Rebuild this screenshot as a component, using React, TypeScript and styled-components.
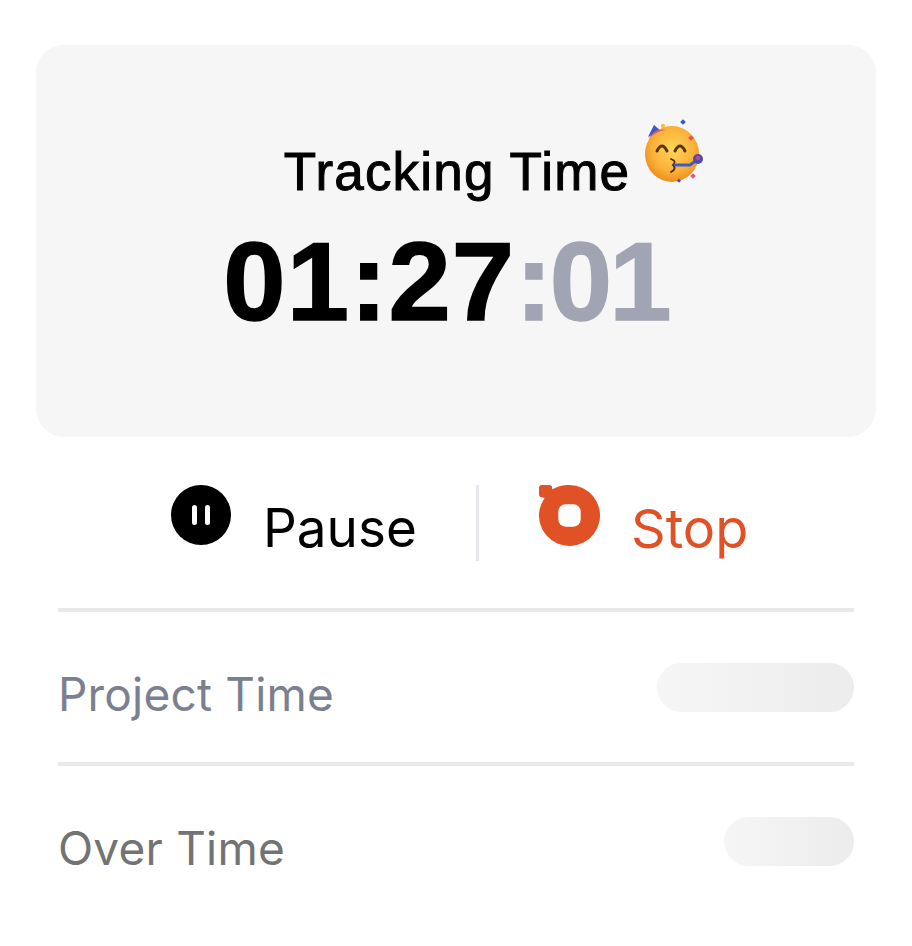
import React from 'react';
import styled, { createGlobalStyle } from 'styled-components';

const GlobalStyle = createGlobalStyle`
  html, body {
    margin: 0;
    padding: 0;
    background: #fff;
  }
`;

const Page = styled.div`
  width: 912px;
  height: 946px;
  box-sizing: border-box;
  padding: 45px 36px 0;
  overflow: hidden;
`;

const TimerCard = styled.section`
  height: 392px;
  box-sizing: border-box;
  padding-top: 78px;
  border-radius: 28px;
  background: #f6f6f6;
  display: flex;
  flex-direction: column;
  align-items: center;
`;

const TitleRow = styled.div`
  display: flex;
  align-items: flex-start;
  height: 100px;
  margin-left: 78px;
`;

const Title = styled.h1`
  margin: 0;
  font: 400 53px/98px 'Liberation Sans', Arial, sans-serif;
  letter-spacing: 1.2px;
  -webkit-text-stroke: 1px #000;
  color: #000;
`;

const Emoji = styled.svg`
  width: 64px;
  height: 68px;
  margin: -4px 0 0 12px;
`;

const Clock = styled.div`
  font: 700 112px/118px 'Liberation Sans', Arial, sans-serif;
  letter-spacing: 1.1px;
  -webkit-text-stroke: 1.5px currentColor;
  color: #000;
  margin-left: -20px;
`;

const Seconds = styled.span`
  color: #a1a5b3;
  letter-spacing: -2.8px;
`;

const Actions = styled.div`
  display: grid;
  grid-template-columns: 440px 3px 1fr;
  grid-template-rows: 76px;
  margin-top: 48px;
`;

const Action = styled.button<{ $tone: string; $gap: number; $start: number; $size: number }>`
  display: flex;
  align-items: flex-start;
  gap: ${p => p.$gap}px;
  padding: 0 0 0 ${p => p.$start}px;
  border: 0;
  background: none;
  color: ${p => p.$tone};
  font: 400 ${p => p.$size}px/87px Inter, 'Noto Sans', sans-serif;
`;

const ActionIcon = styled.svg<{ $size: number }>`
  width: ${p => p.$size}px;
  height: ${p => p.$size}px;
  flex: none;
`;

const Divider = styled.div`
  background: #e6e7ee;
`;

const Stats = styled.div`
  margin: 47px 22px 0;
`;

const StatRow = styled.div<{ $tone: string }>`
  height: 154px;
  box-sizing: border-box;
  border-top: 4px solid #e9e9eb;
  display: flex;
  justify-content: space-between;
  align-items: flex-start;
  padding-top: 51px;
  color: ${p => p.$tone};
  font: 400 46px/62px Inter, 'Noto Sans', sans-serif;
  letter-spacing: 0.2px;
`;

const Placeholder = styled.div<{ $width: number }>`
  width: ${p => p.$width}px;
  height: 49px;
  border-radius: 25px;
  background: linear-gradient(90deg, #f6f6f6 0%, #ececec 100%);
`;

const PartyFace = () => (
  <Emoji viewBox="0 0 64 68" aria-hidden="true">
    <defs>
      <radialGradient id="face" cx="0.52" cy="0.42" r="0.6">
        <stop offset="0" stopColor="#fdd65a" />
        <stop offset="0.65" stopColor="#fbb138" />
        <stop offset="1" stopColor="#ee8a1e" />
      </radialGradient>
    </defs>
    <path d="M6 18 L12 6 L19 12 Z" fill="#3d57c4" />
    <circle cx="21" cy="7" r="2.2" fill="#f3c23a" />
    <rect x="39" y="1" width="4" height="4" fill="#3859c8" transform="rotate(45 41 3)" />
    <ellipse cx="30" cy="35" rx="27" ry="28" fill="url(#face)" />
    <path d="M6 21 Q12 8 24 11 Q13 12 6 21 Z" fill="#d9597a" />
    <path d="M15 32 Q20 22 25 32" fill="none" stroke="#5b3410" strokeWidth="3" strokeLinecap="round" />
    <path d="M33 32 Q38 22 43 32" fill="none" stroke="#5b3410" strokeWidth="3" strokeLinecap="round" />
    <path d="M29 40 Q35 42 31 46 Q35 50 29 53" fill="none" stroke="#4b2c0e" strokeWidth="1.8" strokeLinecap="round" />
    <path d="M33 46 L48 46 L55 41" fill="none" stroke="#3f5bc9" strokeWidth="3" strokeLinecap="round" />
    <circle cx="56" cy="40" r="5" fill="#4d4cae" />
    <circle cx="56" cy="39" r="2" fill="#c74c8c" />
    <rect x="47" y="17" width="4" height="4" fill="#e0555f" transform="rotate(45 49 19)" />
    <rect x="36" y="60" width="3" height="3" fill="#3f5bc9" transform="rotate(45 37 61)" />
    <rect x="49" y="55" width="4" height="4" fill="#e2557f" transform="rotate(45 51 57)" />
  </Emoji>
);

const App: React.FC = () => (
  <>
    <GlobalStyle />
    <Page>
      <TimerCard>
        <TitleRow>
          <Title>Tracking Time</Title>
          <PartyFace />
        </TitleRow>
        <Clock>
          01:27<Seconds>:01</Seconds>
        </Clock>
      </TimerCard>

      <Actions>
        <Action $tone="#000" $gap={32} $start={135} $size={53}>
          <ActionIcon $size={60} viewBox="0 0 60 60" aria-hidden="true">
            <circle cx="30" cy="30" r="30" fill="#000" />
            <rect x="21" y="20" width="5" height="20" rx="2.500" fill="#fff" />
            <rect x="34" y="20" width="5" height="20" rx="2.500" fill="#fff" />
          </ActionIcon>
          Pause
        </Action>
        <Divider />
        <Action $tone="#e05226" $gap={31} $start={60} $size={54}>
          <ActionIcon $size={61} viewBox="0 0 60 60" aria-hidden="true">
            <path
              d="M30 0a30 30 0 1 1-24.500 12.700L3 12a3 3 0 0 1-3-3V3a3 3 0 0 1 3-3h7a3 3 0 0 1 3 3v1.500A29.800 29.800 0 0 1 30 0Z"
              fill="#e05226"
            />
            <rect x="19" y="19" width="22" height="22" rx="7" fill="#fff" />
          </ActionIcon>
          Stop
        </Action>
      </Actions>

      <Stats>
        <StatRow $tone="#7b8090">
          Project Time
          <Placeholder $width={197} />
        </StatRow>
        <StatRow $tone="#737373">
          Over Time
          <Placeholder $width={130} />
        </StatRow>
      </Stats>
    </Page>
  </>
);

export default App;
